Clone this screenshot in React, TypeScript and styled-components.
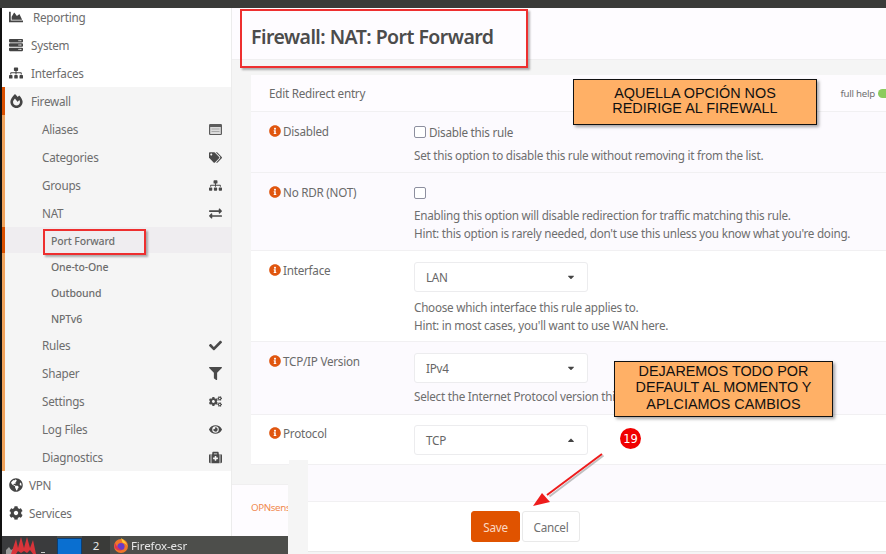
import React from "react";
import styled, { createGlobalStyle } from "styled-components";
import {
  FaChartArea, FaServer, FaSitemap, FaFireAlt, FaTags, FaExchangeAlt,
  FaCheck, FaFilter, FaCogs, FaEye, FaMedkit, FaGlobeAmericas, FaCog, FaInfoCircle, FaCaretDown, FaCaretUp,
} from "react-icons/fa";

const Global = createGlobalStyle`
  html, body { margin: 0; padding: 0; width: 886px; height: 554px; overflow: hidden; background: #fff; }
  * { box-sizing: border-box; }
`;

const Screen = styled.div`
  position: relative;
  width: 886px;
  height: 554px;
  overflow: hidden;
  display: grid;
  grid-template-columns: 232px 56px 1fr;
  grid-template-rows: 8px 452px 24px 52px 18px;
  font-family: "Noto Sans", "Open Sans", sans-serif;
  font-size: 11.7px;
  letter-spacing: -0.25px;
  color: #6a6a6a;
  filter: blur(0.5px);
`;

const TopBar = styled.div`
  grid-column: 1 / 4;
  grid-row: 1;
  background: #3a3b39;
  z-index: 5;
`;

const Sidebar = styled.nav`
  grid-column: 1;
  grid-row: 2 / 5;
  background: #fff;
  border-left: 2px solid #111;
  border-right: 1px solid #ececec;
  display: flex;
  flex-direction: column;
  overflow: hidden;
  z-index: 2;
`;

const TopItem = styled.div<{ $indent: number; $first?: boolean }>`
  height: 28px;
  flex: none;
  margin-top: ${(p) => (p.$first ? "-5px" : 0)};
  display: flex;
  align-items: center;
  padding-left: 7px;
  color: #6d6d6d;
  & > svg { width: 14px; height: 14px; color: #444; flex: none; margin-right: ${(p) => p.$indent}px; }
`;

const Section = styled.div`
  background: #f5f5f5;
  border-left: 3px solid #f0a35c;
  display: flex;
  flex-direction: column;
`;

const SectionHead = styled.div`
  height: 28px;
  display: flex;
  align-items: center;
  margin-left: -3px;
  border-left: 3px solid #d94f00;
  padding-left: 5px;
  color: #6d6d6d;
  & > svg { width: 13px; height: 14px; color: #444; margin-right: 8px; }
`;

const SubItem = styled.div`
  height: 28px;
  display: flex;
  align-items: center;
  justify-content: space-between;
  padding: 0 9px 0 37px;
  color: #6d6d6d;
  & > svg { width: 13px; height: 13px; color: #4a4a4a; }
`;

const LeafItem = styled.div<{ $active?: boolean }>`
  height: 26px;
  display: flex;
  align-items: center;
  padding: 1px 0 0 46px;
  margin-left: -3px;
  border-left: 3px solid ${(p) => (p.$active ? "#d94f00" : "#f0a35c")};
  background: ${(p) => (p.$active ? "#efedf0" : "transparent")};
  font-size: 10.5px;
  font-weight: 500;
  color: #6d6d6d;
  letter-spacing: -0.15px;
`;

const Content = styled.main`
  grid-column: 2 / 4;
  grid-row: 2 / 6;
  background: #f5f5f5;
  display: flex;
  flex-direction: column;
  overflow: hidden;
`;

const PageHead = styled.header`
  height: 52px;
  flex: none;
  background: #fefcff;
  border-bottom: 1px solid #f0eff0;
  padding: 0 0 0 19px;
  display: flex;
  align-items: center;
`;

const PageTitle = styled.h1`
  margin: 6px 0 0;
  font-size: 19.5px;
  font-weight: 600;
  color: #4c4c4c;
  letter-spacing: -0.55px;
`;

const Panel = styled.section`
  margin: 15px 0 0 19px;
  background: #fff;
  flex: none;
`;

const PanelHead = styled.div`
  height: 37px;
  background: #fefcff;
  border-bottom: 1px solid #f1f0f2;
  padding: 0 0 0 18px;
  display: flex;
  align-items: center;
  justify-content: space-between;
`;

const FullHelp = styled.div`
  display: flex;
  align-items: center;
  gap: 3px;
  font-size: 9.7px;
  color: #707070;
  margin-right: -8px;
`;

const Toggle = styled.span`
  display: block;
  width: 16px;
  height: 9px;
  border-radius: 5px;
  background: #8ccb5e;
`;

const Row = styled.div<{ $h: number; $tint?: boolean; $top?: number }>`
  height: ${(p) => p.$h}px;
  background: ${(p) => (p.$tint ? "#fcfafe" : "#fff")};
  border-bottom: 1px solid #f1f0f2;
  display: grid;
  grid-template-columns: 145px 1fr;
  padding: ${(p) => p.$top ?? 11}px 0 0 18px;
`;

const Label = styled.div`
  display: flex;
  align-items: flex-start;
  gap: 2px;
  padding-top: 1px;
  line-height: 15px;
  color: #6a6a6a;
  & > svg { width: 12px; height: 12px; color: #e0560f; flex: none; margin-top: 1px; }
`;

const Field = styled.div`
  display: flex;
  flex-direction: column;
  align-items: flex-start;
`;

const CheckLine = styled.div<{ $below: number }>`
  display: flex;
  align-items: center;
  gap: 3px;
  height: 15px;
  margin-top: 1px;
  margin-bottom: ${(p) => p.$below}px;
`;

const Box = styled.span`
  display: block;
  width: 12px;
  height: 12px;
  border: 1.3px solid #8d8f9f;
  border-radius: 2px;
  background: #fff;
`;

const Help = styled.div`
  line-height: 18px;
  color: #6e6e6e;
  white-space: nowrap;
`;

const Select = styled.div<{ $below?: number }>`
  width: 174px;
  height: 30px;
  flex: none;
  background: #fff;
  border: 1px solid #ececee;
  border-radius: 3px;
  padding: 0 11px 0 11px;
  margin-bottom: ${(p) => p.$below ?? 4}px;
  display: flex;
  align-items: center;
  justify-content: space-between;
  color: #666;
  & > svg { width: 10px; height: 10px; color: #444; }
`;

const SavePanel = styled.div`
  grid-column: 3;
  grid-row: 3 / 6;
  z-index: 3;
  background: #f5f5f5;
  margin-left: 1px;
  padding: 0 0 2px 19px;
  display: flex;
  flex-direction: column;
`;

const SaveInner = styled.div`
  background: #fff;
  flex: 1;
  border-bottom: 1px solid #e8e8e8;
  display: flex;
  flex-direction: column;
`;

const ProtoEnd = styled.div`
  height: 5px;
  border-bottom: 1px solid #f1f0f2;
`;

const Spacer = styled.div`
  height: 37px;
  background: #fcfafe;
  border-bottom: 1px solid #f1f0f2;
`;

const Actions = styled.div`
  display: flex;
  gap: 2px;
  padding: 9px 0 0 163px;
`;

const Btn = styled.button<{ $primary?: boolean }>`
  height: 31px;
  width: ${(p) => (p.$primary ? 49 : 58)}px;
  font: inherit;
  letter-spacing: inherit;
  border-radius: 3px;
  padding: 0;
  border: 1px solid ${(p) => (p.$primary ? "#e05300" : "#e9e9e9")};
  background: ${(p) => (p.$primary ? "#e05300" : "#fff")};
  color: ${(p) => (p.$primary ? "#fbd9c4" : "#707070")};
`;

const Footer = styled.footer`
  grid-column: 2;
  grid-row: 4;
  z-index: 2;
  background: #fefcff;
  border-top: 1px solid #f0eff0;
  padding: 16px 0 0 19px;
  overflow: hidden;
  white-space: nowrap;
  font-size: 9.8px;
  letter-spacing: -0.4px;
  color: #f08a4f;
`;

const Taskbar = styled.div`
  grid-column: 1 / 3;
  grid-row: 5;
  z-index: 4;
  background: #4d4e4b;
  border-left: 2px solid #111;
  display: flex;
  align-items: stretch;
  color: #e8e8e8;
  font-size: 11.5px;
  letter-spacing: -0.1px;
`;

const LogoSlot = styled.div`
  width: 55px;
  background: #3a3b3d;
  display: flex;
  align-items: flex-end;
  padding-left: 4px;
`;

const BlueDesk = styled.div`
  width: 25px;
  background: #0a6fd0;
  border: 1px solid #0b3f75;
  border-bottom: 0;
  margin-top: 2px;
`;

const DeskNum = styled.div`
  width: 28px;
  background: #3a3b39;
  display: flex;
  align-items: center;
  justify-content: center;
`;

const TaskApp = styled.div`
  display: flex;
  align-items: center;
  gap: 2px;
  padding-left: 3px;
`;

const Callout = styled.div<{ $x: number; $y: number; $w: number; $h: number; $lh: number }>`
  position: absolute;
  left: ${(p) => p.$x}px;
  top: ${(p) => p.$y}px;
  width: ${(p) => p.$w}px;
  height: ${(p) => p.$h}px;
  z-index: 6;
  background: #ffb066;
  border: 1.5px solid #111;
  box-shadow: 2px 2px 3px rgba(0,0,0,.35);
  font-family: "Liberation Sans", Arial, sans-serif;
  font-size: 14.4px;
  letter-spacing: 0;
  line-height: ${(p) => p.$lh}px;
  color: #111;
  padding-bottom: 3px;
  display: flex;
  align-items: center;
  justify-content: center;
  text-align: center;
`;

const Highlight = styled.div<{ $x: number; $y: number; $w: number; $h: number }>`
  position: absolute;
  left: ${(p) => p.$x}px;
  top: ${(p) => p.$y}px;
  width: ${(p) => p.$w}px;
  height: ${(p) => p.$h}px;
  z-index: 6;
  border: 2px solid #ee2f2f;
  box-shadow: 2px 2px 2px rgba(0,0,0,.3);
`;

const Badge = styled.div`
  position: absolute;
  left: 620px;
  top: 428px;
  width: 21px;
  height: 21px;
  border-radius: 50%;
  z-index: 6;
  background: #f00000;
  color: #fff;
  font-family: "DejaVu Sans", sans-serif;
  font-size: 11.5px;
  letter-spacing: 0;
  display: flex;
  align-items: center;
  justify-content: center;
`;

const ArrowArt = styled.svg`
  position: absolute;
  left: 525px;
  top: 448px;
  z-index: 6;
`;

const AliasIcon = () => (
  <svg viewBox="0 0 13 13">
    <rect x="0" y="1" width="13" height="11" rx="1.2" fill="#5c5c5c" />
    <rect x="1.2" y="4" width="10.6" height="7" fill="#dcdcdc" />
    <path d="M2.5 6h8M2.5 8.5h8" stroke="#a8a8a8" strokeWidth="1" />
  </svg>
);

const leaves = ["Port Forward", "One-to-One", "Outbound", "NPTv6"];

export default function App() {
  return (
    <Screen>
      <Global />
      <TopBar />
      <Sidebar>
        <TopItem $indent={10} $first><FaChartArea />Reporting</TopItem>
        <TopItem $indent={8}><FaServer />System</TopItem>
        <TopItem $indent={8}><FaSitemap />Interfaces</TopItem>
        <Section>
          <SectionHead><FaFireAlt />Firewall</SectionHead>
          <SubItem>Aliases<AliasIcon /></SubItem>
          <SubItem>Categories<FaTags /></SubItem>
          <SubItem>Groups<FaSitemap /></SubItem>
          <SubItem>NAT<FaExchangeAlt /></SubItem>
          {leaves.map((l, i) => <LeafItem key={l} $active={i === 0}>{l}</LeafItem>)}
          <SubItem>Rules<FaCheck /></SubItem>
          <SubItem>Shaper<FaFilter /></SubItem>
          <SubItem>Settings<FaCogs /></SubItem>
          <SubItem>Log Files<FaEye /></SubItem>
          <SubItem>Diagnostics<FaMedkit /></SubItem>
        </Section>
        <TopItem $indent={6}><FaGlobeAmericas />VPN</TopItem>
        <TopItem $indent={6}><FaCog />Services</TopItem>
      </Sidebar>
      <Content>
        <PageHead><PageTitle>Firewall: NAT: Port Forward</PageTitle></PageHead>
        <Panel>
          <PanelHead>
            Edit Redirect entry
            <FullHelp>full help <Toggle /></FullHelp>
          </PanelHead>
          <Row $h={61} $tint>
            <Label><FaInfoCircle />Disabled</Label>
            <Field>
              <CheckLine $below={7}><Box />Disable this rule</CheckLine>
              <Help>Set this option to disable this rule without removing it from the list.</Help>
            </Field>
          </Row>
          <Row $h={78} $tint>
            <Label><FaInfoCircle />No RDR (NOT)</Label>
            <Field>
              <CheckLine $below={6}><Box /></CheckLine>
              <Help>Enabling this option will disable redirection for traffic matching this rule.</Help>
              <Help>Hint: this option is rarely needed, don't use this unless you know what you're doing.</Help>
            </Field>
          </Row>
          <Row $h={91}>
            <Label><FaInfoCircle />Interface</Label>
            <Field>
              <Select $below={6}>LAN<FaCaretDown /></Select>
              <Help>Choose which interface this rule applies to.</Help>
              <Help>Hint: in most cases, you'll want to use WAN here.</Help>
            </Field>
          </Row>
          <Row $h={73} $tint>
            <Label><FaInfoCircle />TCP/IP Version</Label>
            <Field>
              <Select>IPv4<FaCaretDown /></Select>
              <Help>Select the Internet Protocol version this rule applies to.</Help>
            </Field>
          </Row>
          <Row $h={50} $top={10}>
            <Label><FaInfoCircle />Protocol</Label>
            <Field>
              <Select>TCP<FaCaretUp /></Select>
            </Field>
          </Row>
        </Panel>
      </Content>
      <Footer>OPNsense (c) 2014-2022</Footer>
      <SavePanel>
        <SaveInner>
          <ProtoEnd />
          <Spacer />
          <Actions>
            <Btn $primary>Save</Btn>
            <Btn>Cancel</Btn>
          </Actions>
        </SaveInner>
      </SavePanel>
      <Taskbar>
        <LogoSlot>
          <svg width="40" height="18" viewBox="0 0 40 18">
            <path d="M0 18V14L3 11L5 14L7 13V18Z" fill="#9a9a9a" />
            <path d="M5 18L10 3L12 12L15 1L18 12L21 1L24 12L27 4L30 18H27L24 14L21 17L18 15L15 17L12 15L10 18Z" fill="#d8343a" />
            <rect x="35" y="16" width="4" height="1" fill="#ccc" />
          </svg>
        </LogoSlot>
        <BlueDesk />
        <DeskNum>2</DeskNum>
        <TaskApp>
          <svg width="16" height="16" viewBox="0 0 16 16">
            <circle cx="8" cy="9" r="7" fill="#f0762a" />
            <circle cx="8" cy="9.5" r="3.6" fill="#6a3bc8" />
            <path d="M8 1C11 3 13 5 14.5 9C13 6.5 11 6 9.5 5.5Z" fill="#ffcc33" />
            <path d="M2 6C3 8 5 12 9 13C6 14.5 2.5 13 1.5 10Z" fill="#e2334f" />
          </svg>
          Firefox-esr
        </TaskApp>
      </Taskbar>
      <Highlight $x={240} $y={9} $w={288} $h={59} />
      <Highlight $x={43} $y={229} $w={103} $h={26} />
      <Callout $x={573} $y={79} $w={244} $h={46} $lh={15}>AQUELLA OPCIÓN NOS<br />REDIRIGE AL FIREWALL</Callout>
      <Callout $x={614} $y={361} $w={219} $h={56} $lh={16.5}>DEJAREMOS TODO POR<br />DEFAULT AL MOMENTO Y<br />APLCIAMOS CAMBIOS</Callout>
      <Badge>19</Badge>
      <ArrowArt width="85" height="65" viewBox="0 0 85 65">
        <path d="M77 6L23 47" stroke="#777" strokeOpacity=".45" strokeWidth="2" transform="translate(1.5 1.5)" />
        <path d="M77 6L22 47" stroke="#ee1c1c" strokeWidth="2" />
        <path d="M8 58L17 45L25 54Z" fill="#ee1c1c" />
      </ArrowArt>
    </Screen>
  );
}
